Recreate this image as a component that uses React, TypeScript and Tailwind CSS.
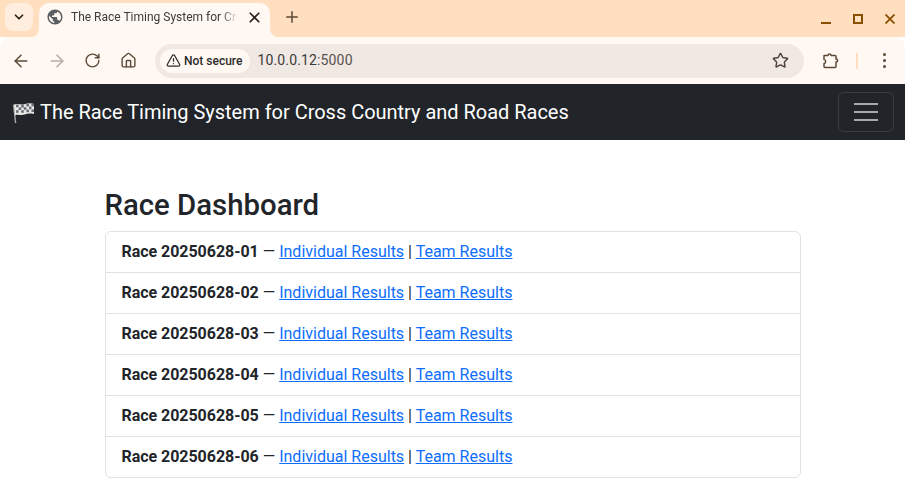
import { ArrowLeft, ArrowRight, RotateCw, Home, Star, TriangleAlert, X, Plus, ChevronDown } from 'lucide-react';

const races = ['01', '02', '03', '04', '05', '06'];

// Checkered flag, drawn because no emoji font is available
const FlagIcon = () => (
  <svg width="24" height="24" viewBox="0 0 24 24" className="shrink-0">
    <path d="M2.6 4.6 L4.6 23" stroke="#a8aaac" strokeWidth="1.4" fill="none" />
    <path d="M3 4.6 C7 2.8 10 5.8 14 4 C17 3 20 3 23 4 L23 14 C19 13.2 16 13.6 13.5 14.6 C10 15.8 7 13.8 4 15.2 Z" fill="#e8e8e8" />
    <g fill="#6b6e71">
      <rect x="5" y="4.6" width="2.6" height="2.6" />
      <rect x="10.2" y="5" width="2.6" height="2.6" />
      <rect x="15.4" y="3.8" width="2.6" height="2.6" />
      <rect x="20.4" y="3.8" width="2.6" height="2.6" />
      <rect x="7.6" y="7.4" width="2.6" height="2.6" />
      <rect x="12.8" y="7.2" width="2.6" height="2.6" />
      <rect x="18" y="6.6" width="2.4" height="2.6" />
      <rect x="5" y="10.2" width="2.6" height="2.6" />
      <rect x="10.2" y="10.2" width="2.6" height="2.6" />
      <rect x="15.4" y="9.6" width="2.6" height="2.6" />
      <rect x="20.4" y="9.4" width="2.6" height="2.6" />
    </g>
  </svg>
);

const GlobeIcon = () => (
  <svg width="18" height="18" viewBox="0 0 24 24" fill="#5b5f64" className="shrink-0">
    <path d="M12 2C6.48 2 2 6.48 2 12s4.48 10 10 10 10-4.48 10-10S17.52 2 12 2zm-1 17.93c-3.95-.49-7-3.85-7-7.93 0-.62.08-1.21.21-1.79L9 15v1c0 1.1.9 2 2 2v1.93zm6.9-2.54c-.26-.81-1-1.39-1.9-1.39h-1v-3c0-.55-.45-1-1-1H8v-2h2c.55 0 1-.45 1-1V7h2c1.1 0 2-.9 2-2v-.41c2.93 1.19 5 4.06 5 7.41 0 2.08-.8 3.97-2.1 5.39z" />
  </svg>
);

// Chrome's extensions button
const ExtensionIcon = () => (
  <svg width="17" height="17" viewBox="0 0 17 17" fill="none" stroke="#5c4a36" strokeWidth="1.5" strokeLinejoin="round" className="shrink-0">
    <path d="M2 3.4 H6 C6 1.6 9 1.6 9 3.4 H13 C13.6 3.4 14 3.8 14 4.4 V7 C16.2 7 16.2 10 14 10 V14.4 C14 15 13.6 15.4 13 15.4 H3 C2.4 15.4 2 15 2 14.4 V11.4 C4.2 11.2 4.2 7.6 2 7.4 Z" />
  </svg>
);

const MenuDots = () => (
  <div className="flex flex-col gap-[3px]">
    <div className="h-[3px] w-[3px] rounded-full bg-[#5c4a36]" />
    <div className="h-[3px] w-[3px] rounded-full bg-[#5c4a36]" />
    <div className="h-[3px] w-[3px] rounded-full bg-[#5c4a36]" />
  </div>
);

export default function App() {
  return (
    <div className="h-[501px] w-[905px] overflow-hidden bg-white font-['Roboto',sans-serif] text-[#212529]">
      {/* Browser tab strip */}
      <div className="flex h-[37px] items-start bg-[#ffdfbf] pt-[3px]">
        <div className="ml-[5px] flex h-[28px] w-[28px] items-center justify-center rounded-lg bg-[#ffeedd]">
          <ChevronDown className="h-[14px] w-[14px] text-[#2b2116]" strokeWidth={3} />
        </div>
        <div className="relative ml-[6px] flex h-[34px] w-[231px] items-center rounded-t-[10px] bg-[#fff8f3] pb-[6px] pl-[7px]">
          <div className="absolute -left-2 bottom-0 h-2 w-2 bg-[#fff8f3]">
            <div className="h-full w-full rounded-br-lg bg-[#ffdfbf]" />
          </div>
          <div className="absolute -right-2 bottom-0 h-2 w-2 bg-[#fff8f3]">
            <div className="h-full w-full rounded-bl-lg bg-[#ffdfbf]" />
          </div>
          <GlobeIcon />
          <span className="ml-[7px] w-[167px] overflow-hidden whitespace-nowrap text-[12px] text-[#3b3b3b] [mask-image:linear-gradient(to_right,black_150px,transparent_167px)]">
            The Race Timing System for Cross
          </span>
          <X className="ml-[8px] h-[17px] w-[17px] shrink-0 text-[#2b2116]" strokeWidth={2.4} />
        </div>
        <Plus className="ml-[13px] mt-[5px] h-[18px] w-[18px] text-[#5c4a36]" strokeWidth={2} />
        <div className="ml-auto mr-[10px] mt-[10px] flex items-center gap-[22px]">
          <div className="mt-[9px] h-[2px] w-[10px] bg-[#8a4f00]" />
          <div className="h-[10px] w-[10px] border-2 border-[#8a4f00]" />
          <svg width="10" height="10" viewBox="0 0 10 10" stroke="#8a4f00" strokeWidth="1.8">
            <path d="M0.5 0.5 L9.5 9.5 M9.5 0.5 L0.5 9.5" />
          </svg>
        </div>
      </div>

      {/* Browser toolbar */}
      <div className="flex h-[47px] items-center rounded-t-[10px] bg-[#fff8f3]">
        <ArrowLeft className="ml-[11px] h-5 w-5 text-[#5c4a36]" strokeWidth={1.8} />
        <ArrowRight className="ml-[16px] h-5 w-5 text-[#b5aba2]" strokeWidth={1.8} />
        <RotateCw className="ml-[17px] h-[17px] w-[17px] text-[#5c4a36]" strokeWidth={2} />
        <Home className="ml-[19px] h-[17px] w-[17px] text-[#5c4a36]" strokeWidth={2} />
        <div className="ml-[18px] flex h-[34px] w-[649px] items-center rounded-full bg-[#f0e8e3] pl-[5px] pr-[15px]">
          <div className="flex h-[24px] items-center gap-[3px] rounded-full bg-[#fff8f3] pl-[6px] pr-[8px]">
            <TriangleAlert className="h-[15px] w-[15px] text-[#2b2b2b]" strokeWidth={2} />
            <span className="text-[12px] font-medium text-[#2b2b2b]">Not secure</span>
          </div>
          <span className="ml-[7px] text-[14px] tracking-[0.15px] text-[#3b3b3b]">10.0.0.12<span className="text-[#55524f]">:5000</span></span>
          <Star className="ml-auto h-[17px] w-[17px] text-[#4d4036]" strokeWidth={2} />
        </div>
        <div className="ml-[18px]">
          <ExtensionIcon />
        </div>
        <div className="ml-[17px] h-4 w-[2px] bg-[#ffdfbf]" />
        <div className="ml-[25px]">
          <MenuDots />
        </div>
      </div>

      {/* Navbar */}
      <nav className="flex h-[56px] items-center justify-between bg-[#212529] pl-[11px] pr-[11px]">
        <div className="flex items-center text-[20px] tracking-[-0.02px] text-white">
          <FlagIcon />
          <span className="ml-[5px]">The Race Timing System for Cross Country and Road Races</span>
        </div>
        <div className="flex h-[40px] w-[56px] flex-col items-center justify-center gap-[6px] rounded-md border border-[#3a3e42]">
          <div className="h-[2px] w-6 bg-[#a6a8a9]" />
          <div className="h-[2px] w-6 bg-[#a6a8a9]" />
          <div className="h-[2px] w-6 bg-[#a6a8a9]" />
        </div>
      </nav>

      {/* Page content */}
      <main className="mx-auto mt-12 w-[720px] px-3">
        <h2 className="mb-2 text-[29.35px] font-medium leading-[1.2]">Race Dashboard</h2>
        <ul className="rounded-md border border-[#dee2e6]">
          {races.map((r, i) => (
            <li key={r} className={`px-4 py-2 text-[16px] leading-6 ${i > 0 ? 'border-t border-[#dee2e6]' : ''}`}>
              <strong className="font-bold tracking-[-0.04px]">Race 20250628-{r}</strong> — <a href="#" className="text-[#0d6efd] underline">Individual Results</a> | <a href="#" className="text-[#0d6efd] underline">Team Results</a>
            </li>
          ))}
        </ul>
      </main>
    </div>
  );
}
